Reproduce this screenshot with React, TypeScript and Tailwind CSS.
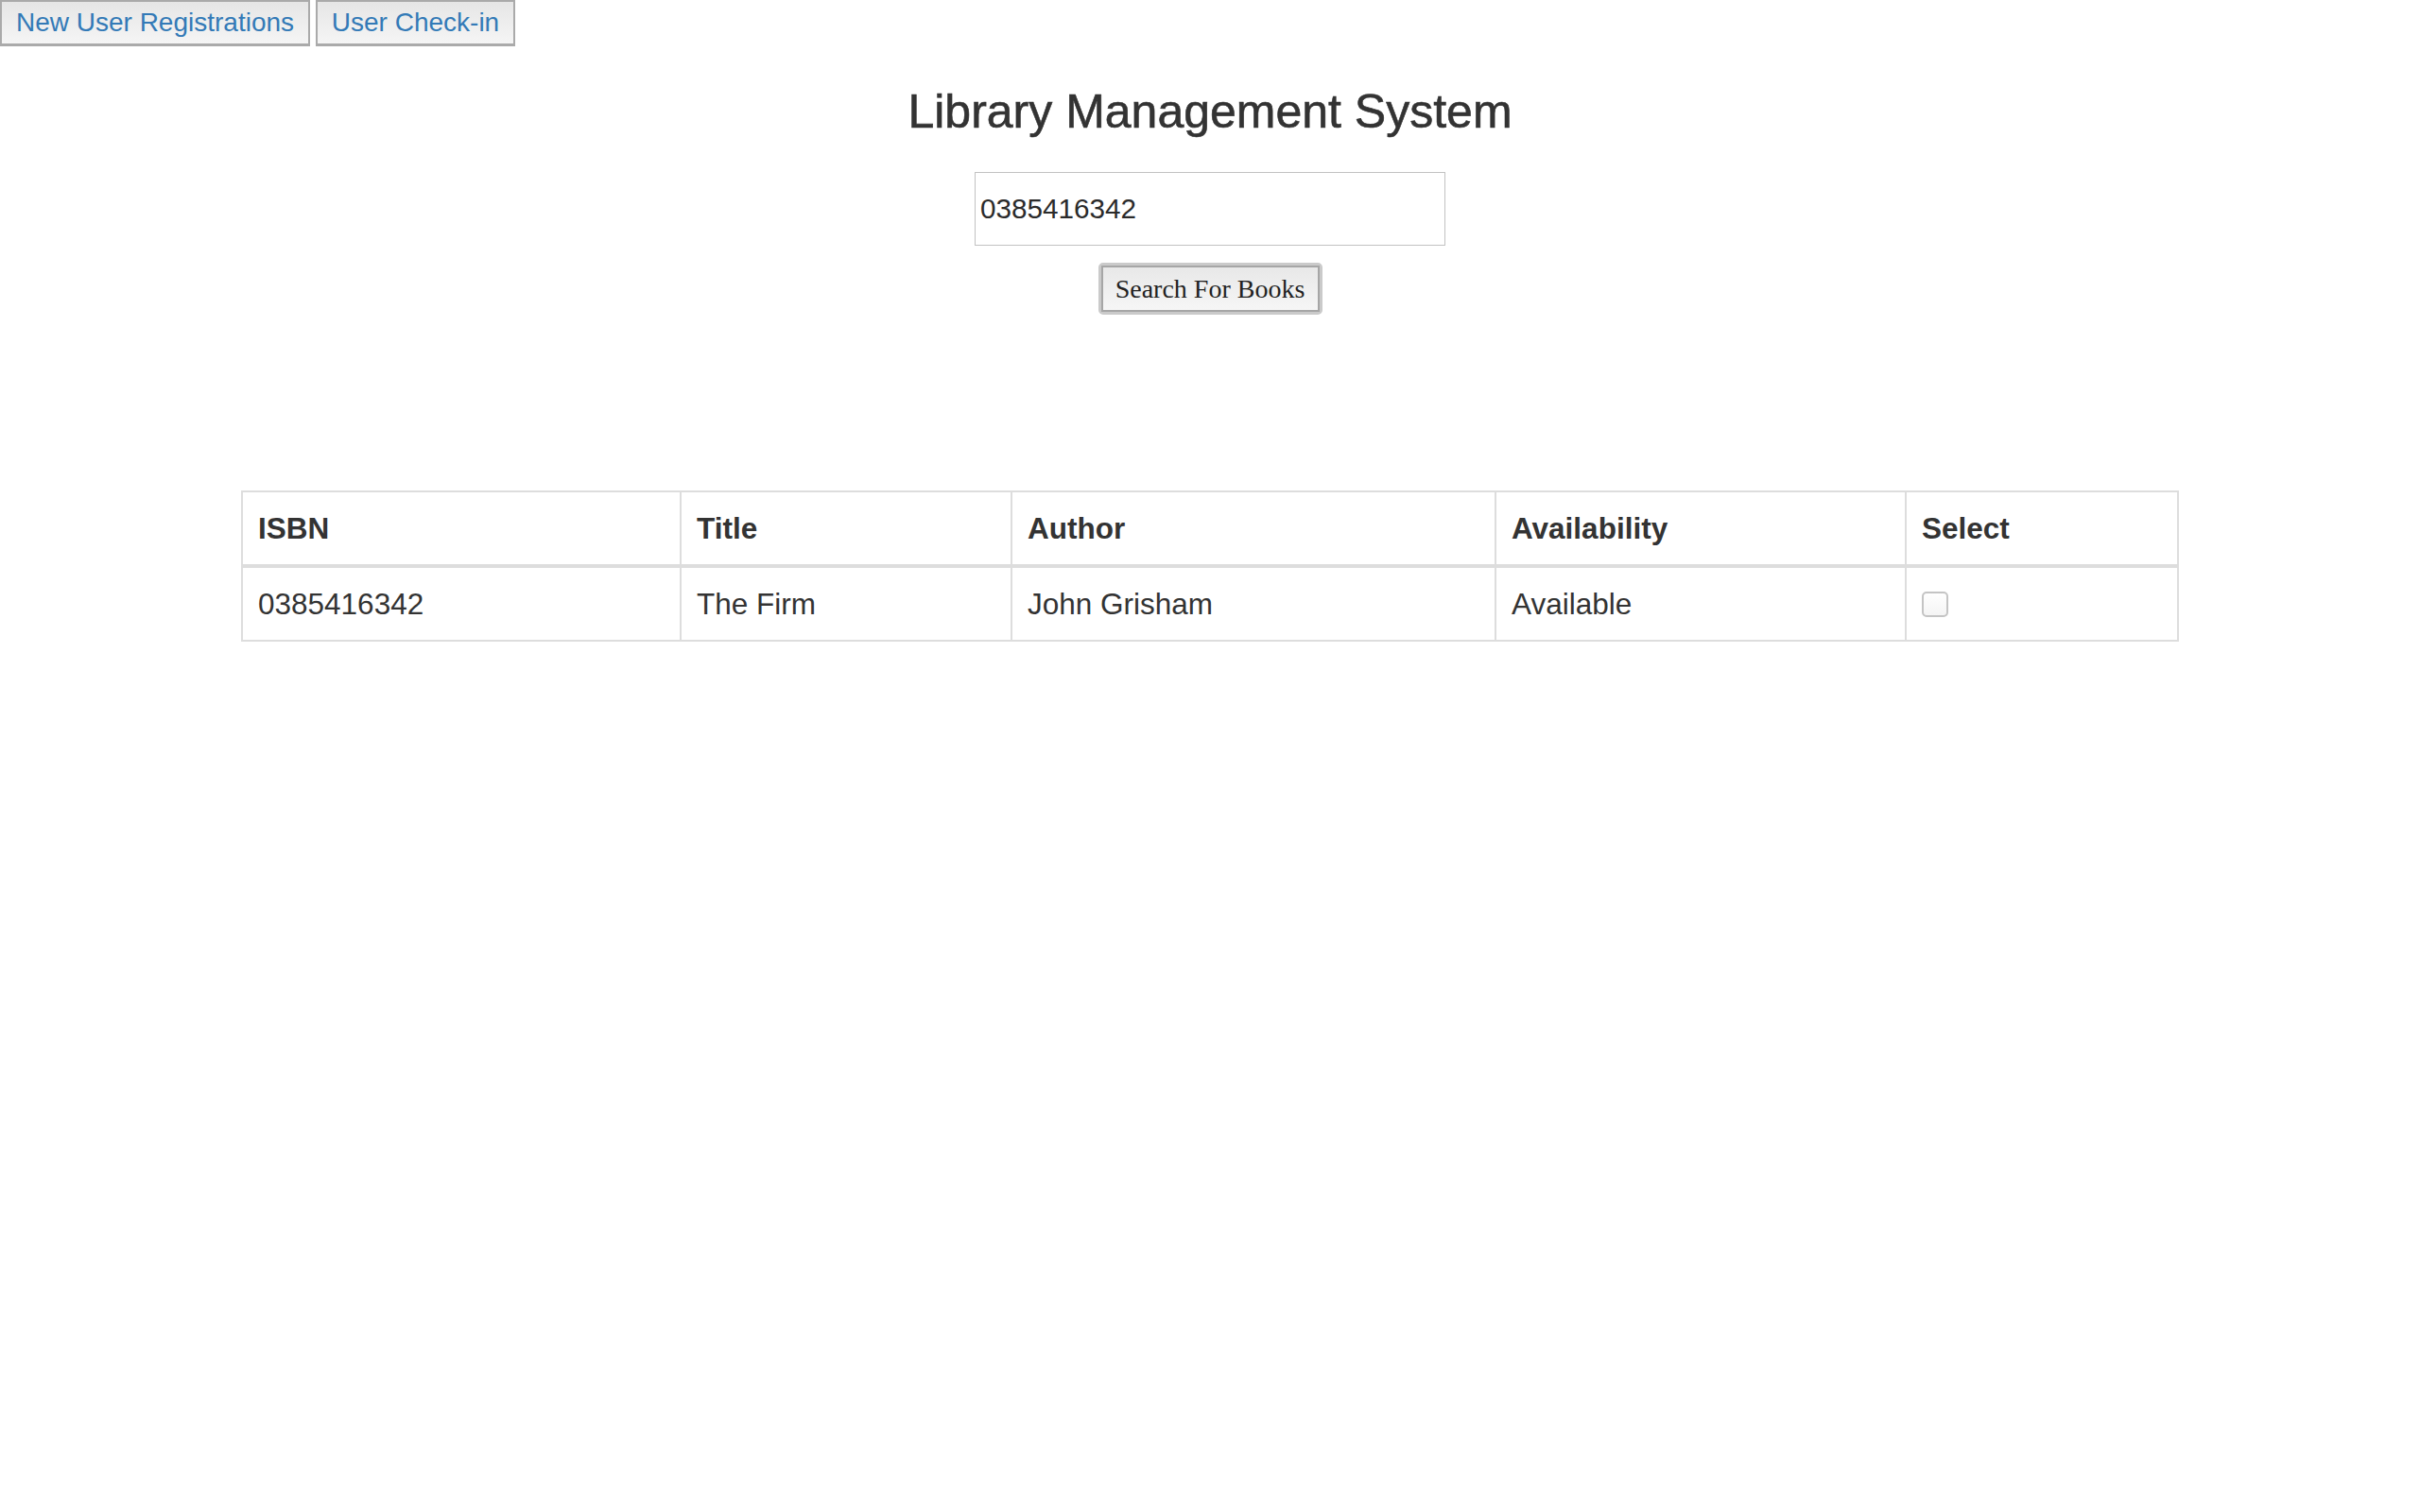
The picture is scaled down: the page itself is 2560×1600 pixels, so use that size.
import React from "react";

const books = [
    { isbn: "0385416342", title: "The Firm", author: "John Grisham", availability: "Available" },
];

export default function App() {
    return (
        <div className="min-h-screen bg-white font-['Liberation_Sans',Arial,sans-serif] text-[#333]">
            {/* top nav buttons */}
            <div className="flex gap-[6px]">
                <button className="h-[49px] w-[328px] border-2 border-b-[3px] border-[#aaaaaa] bg-linear-to-b from-[#e6e6e6] to-[#f5f5f5] text-[28px] text-[#337ab7]">
                    New User Registrations
                </button>
                <button className="h-[49px] w-[211px] border-2 border-b-[3px] border-[#aaaaaa] bg-linear-to-b from-[#e6e6e6] to-[#f5f5f5] text-[28px] text-[#337ab7]">
                    User Check-in
                </button>
            </div>

            <h3 className="mt-[42px] text-center text-[50px] leading-[1.1] text-[#333] [-webkit-text-stroke:0.6px_#333]">
                Library Management System
            </h3>

            <div className="mt-[36px] flex flex-col items-center">
                <input
                    type="text"
                    defaultValue="0385416342"
                    className="h-[78px] w-[498px] border border-[#c2c2c2] px-[5px] text-[29.7px] text-[#2b2b2b] outline-none"
                />
                <button className="mt-[18px] h-[55px] w-[237px] rounded-[5px] border-[3px] border-[#cacaca] p-0">
                    <span className="flex h-full w-full items-center justify-center border-2 border-[#a6a6a6] bg-linear-to-b from-[#e8e8e8] to-[#f6f6f6] font-['Liberation_Serif',serif] text-[28px] text-[#222]">
                        Search For Books
                    </span>
                </button>
            </div>

            <table className="mx-auto mt-[186px] w-[2048px] table-fixed border-collapse text-left text-[31.5px]">
                <colgroup>
                    <col className="w-[464px]" />
                    <col className="w-[350px]" />
                    <col className="w-[512px]" />
                    <col className="w-[434px]" />
                    <col className="w-[288px]" />
                </colgroup>
                <thead>
                    <tr>
                        {["ISBN", "Title", "Author", "Availability", "Select"].map((h) => (
                            <th
                                key={h}
                                className="border-2 border-b-4 border-[#dddddd] px-[16px] py-[15px] font-bold leading-[46px]"
                            >
                                {h}
                            </th>
                        ))}
                    </tr>
                </thead>
                <tbody>
                    {books.map((b) => (
                        <tr key={b.isbn}>
                            <td className="border-2 border-[#dddddd] px-[16px] py-[15px] leading-[46px]">{b.isbn}</td>
                            <td className="border-2 border-[#dddddd] px-[16px] py-[15px] leading-[46px]">{b.title}</td>
                            <td className="border-2 border-[#dddddd] px-[16px] py-[15px] leading-[46px]">{b.author}</td>
                            <td className="border-2 border-[#dddddd] px-[16px] py-[15px] leading-[46px]">{b.availability}</td>
                            <td className="border-2 border-[#dddddd] px-[16px] py-[15px] leading-[46px]">
                                <input
                                    type="checkbox"
                                    className="block h-[27px] w-[28px] appearance-none rounded-[5px] border-2 border-[#c4c4c4] bg-linear-to-b from-white to-[#f4f4f4]"
                                />
                            </td>
                        </tr>
                    ))}
                </tbody>
            </table>
        </div>
    );
}
